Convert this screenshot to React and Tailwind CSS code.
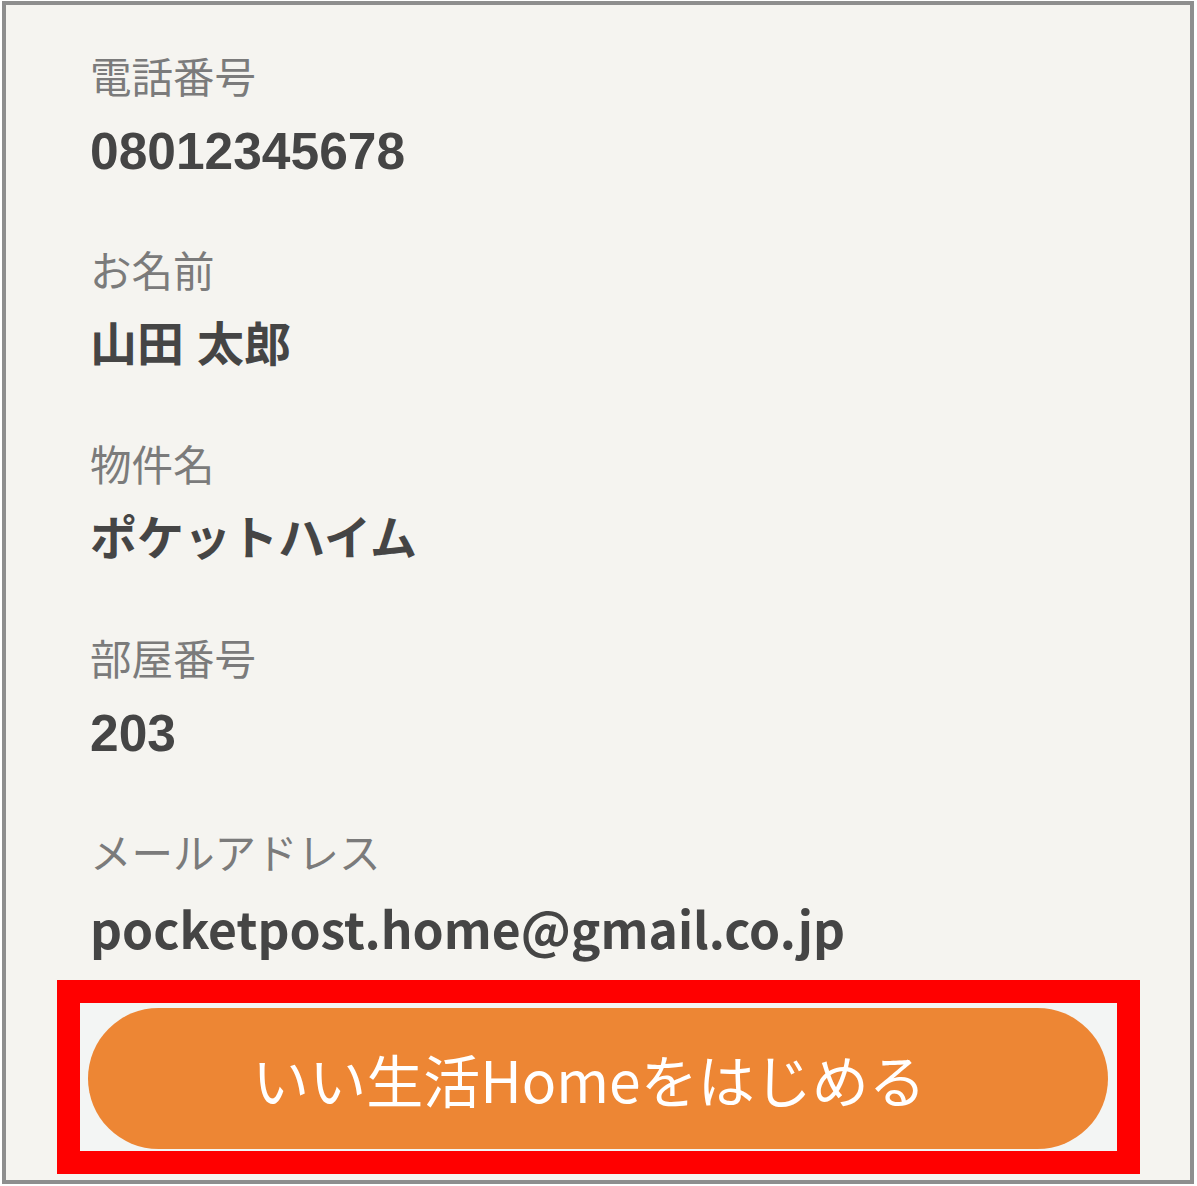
import React from "react";

const fields = [
  { label: "電話番号", value: "08012345678", cls: "font-['Liberation_Sans','Noto_Sans_CJK_JP',sans-serif] text-[51.5px]" },
  { label: "お名前", value: "山田 太郎", cls: "font-['Liberation_Sans','Noto_Sans_CJK_JP',sans-serif] text-[47px]" },
  { label: "物件名", value: "ポケットハイム", cls: "font-['Liberation_Sans','Noto_Sans_CJK_JP',sans-serif] text-[47px]" },
  { label: "部屋番号", value: "203", cls: "font-['Liberation_Sans','Noto_Sans_CJK_JP',sans-serif] text-[51.5px]" },
  { label: "メールアドレス", value: "pocketpost.home@gmail.co.jp", cls: "font-['Noto_Sans_CJK_JP',sans-serif] text-[49.8px]" },
];

export default function App() {
  return (
    <div className="w-[1197px] h-[1186px] bg-white">
      <div className="ml-[2px] mt-[1px] w-[1192px] h-[1183px] border-4 border-[#8e8e8e] bg-[#f5f4f0] flex flex-col">
        <div className="pl-[84px] pt-[50px] flex flex-col">
          {fields.map((f, i) => (
            <div key={i} className={i === 0 ? "flex flex-col" : "flex flex-col mt-[73px]"}>
              <div className="font-['Noto_Sans_CJK_JP',sans-serif] text-[41.5px] leading-[40px] text-[#7b7b7b]">
                {f.label}
              </div>
              <div className={`mt-[31px] leading-[50px] font-bold text-[#454545] ${f.cls}`}>
                {f.value}
              </div>
            </div>
          ))}
        </div>
        <div className="ml-[51px] mt-[28px] w-[1083px] h-[194px] border-[23px] border-[#ff0000] bg-[#f3f5f4] pl-[8px] pr-[9px] pt-[5px] pb-[2px]">
          <div className="h-full w-full rounded-full bg-[#ed8634] flex items-center justify-center pr-[18px]">
            <span className="font-['Noto_Sans_CJK_JP',sans-serif] text-[57px] leading-none text-white">
              いい生活Homeをはじめる
            </span>
          </div>
        </div>
      </div>
    </div>
  );
}
